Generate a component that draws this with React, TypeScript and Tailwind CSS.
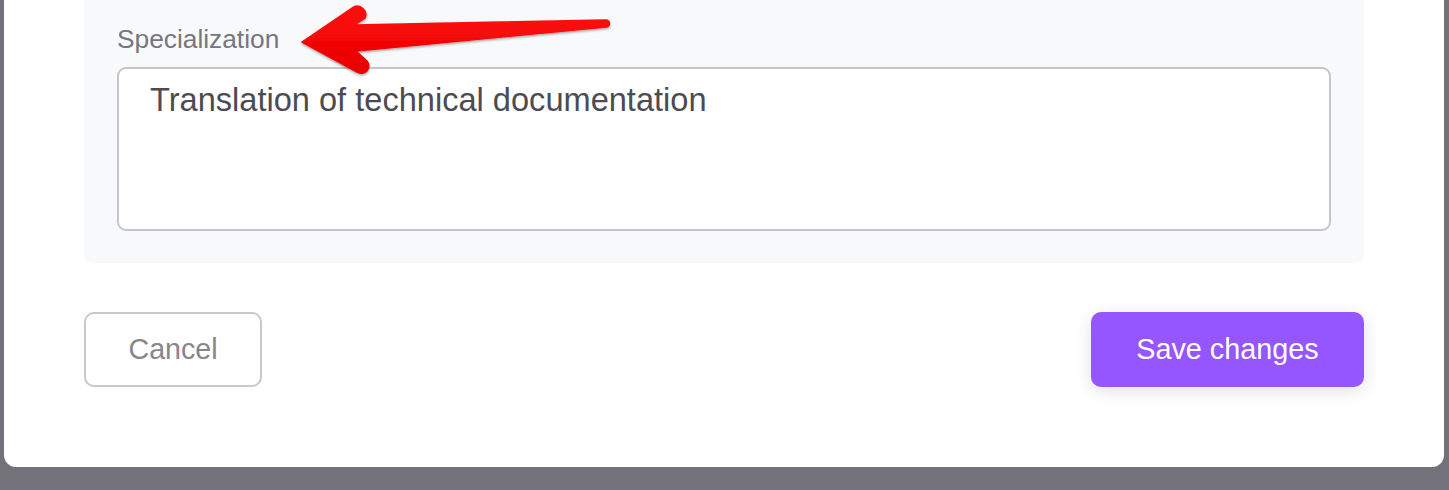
import React from 'react';

const font = { fontFamily: '"Liberation Sans", Arial, sans-serif' };

const Arrow: React.FC = () => (
  <svg className="absolute left-0 top-0 pointer-events-none" width="640" height="90" viewBox="0 0 640 90">
    <defs>
      <linearGradient id="arrowFill" x1="0" y1="0" x2="0" y2="1">
        <stop offset="0" stopColor="#ff0d0d" />
        <stop offset="1" stopColor="#e80000" />
      </linearGradient>
      <filter id="arrowShadow" x="-10%" y="-30%" width="120%" height="160%">
        <feDropShadow dx="0" dy="1.5" stdDeviation="1" floodColor="#000" floodOpacity="0.35" />
      </filter>
    </defs>
    <path
      d="M302 42 L352 8 A8.5 8.5 0 0 1 365 18 L354 25 L606 20 A3.5 3.5 0 0 1 606 27 L356 51 L367 61 A7.5 7.5 0 0 1 357 72 Z"
      fill="url(#arrowFill)"
      stroke="url(#arrowFill)"
      strokeWidth="1.5"
      strokeLinejoin="round"
      filter="url(#arrowShadow)"
    />
  </svg>
);

const App: React.FC = () => {
  return (
    <div className="h-[490px] w-full bg-[#737179] pl-[4px] pr-[5px] relative" style={font}>
      <div className="h-[467px] bg-white rounded-b-[12px] px-[80px]">
        {/* Specialization panel */}
        <div className="bg-[#f8f9fa] rounded-b-[9px] px-[33px] pt-[23px] pb-[32px]">
          <label className="block text-[26.3px] leading-[32px] text-[#76767e]">Specialization</label>
          <textarea
            readOnly
            value="Translation of technical documentation"
            className="mt-[12px] block w-full h-[164px] resize-none bg-white border-2 border-[#c6c6ca] rounded-[9px] px-[31px] pt-[11px] text-[32.6px] leading-[40px] text-[#4c4b53] outline-none"
            style={font}
          />
        </div>

        <div className="mt-[49px] flex items-center justify-between">
          <button className="w-[178px] h-[75px] border-2 border-[#c9c9cc] rounded-[10px] bg-white text-[28.6px] text-[#87868d]">
            Cancel
          </button>
          <button className="w-[273px] h-[75px] rounded-[10px] bg-[#9555ff] text-[28.8px] text-white shadow-[0_4px_18px_rgba(0,0,0,0.12)]">
            Save changes
          </button>
        </div>
      </div>
      <Arrow />
    </div>
  );
};

export default App;
